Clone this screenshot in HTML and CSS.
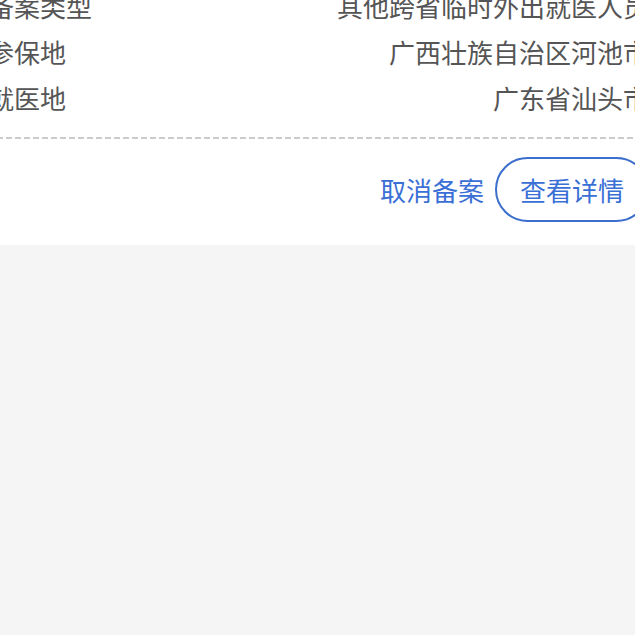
FILE: index.html
```html
<!DOCTYPE html>
<html>
   <head>
      <meta name="viewport" content="width=device-width, initial-scale=1">
      <link rel="stylesheet" href="styles.css">
   </head>
   <body>
      <div class="card">

         <!--
         Record details
         -->
         <div class="info">
            <div class="row">
               <span class="label">备案类型</span>
               <span class="value">其他跨省临时外出就医人员</span>
            </div>
            <div class="row">
               <span class="label">参保地</span>
               <span class="value">广西壮族自治区河池市</span>
            </div>
            <div class="row">
               <span class="label">就医地</span>
               <span class="value">广东省汕头市</span>
            </div>
         </div>

         <!--
         Actions
         -->
         <div class="actions">
            <a class="cancel">取消备案</a>
            <a class="detail">查看详情</a>
         </div>

      </div>
   </body>
</html>
```

FILE: styles.css
```css
body {
   margin : 0;
   background-color : #f5f5f5;
   font-family : "Noto Sans CJK SC", "Noto Sans", sans-serif;
}

.card {
   margin : -17px -14px 0 -12px;
   background-color : #ffffff;
}

.info {
   background-image : repeating-linear-gradient(to right, #cccccc 0, #cccccc 6px, transparent 6px, transparent 9px);
   background-size : 100% 2px;
   background-position : left bottom;
   background-repeat : no-repeat;
   padding-bottom : 18px;
}

.row {
   display : flex;
   justify-content : space-between;
   height : 46px;
   line-height : 46px;
   font-size : 26px;
   color : #555555;
}

.actions {
   display : flex;
   justify-content : flex-end;
   align-items : center;
   gap : 11px;
   padding : 18px 0 23px 0;
}

.cancel {
   font-size : 26px;
   color : #3a6fd6;
}

.detail {
   font-size : 26px;
   color : #3a6fd6;
   height : 61px;
   line-height : 61px;
   padding : 0 23px;
   border : 2px solid #3c6fcc;
   border-radius : 33px;
}
```
